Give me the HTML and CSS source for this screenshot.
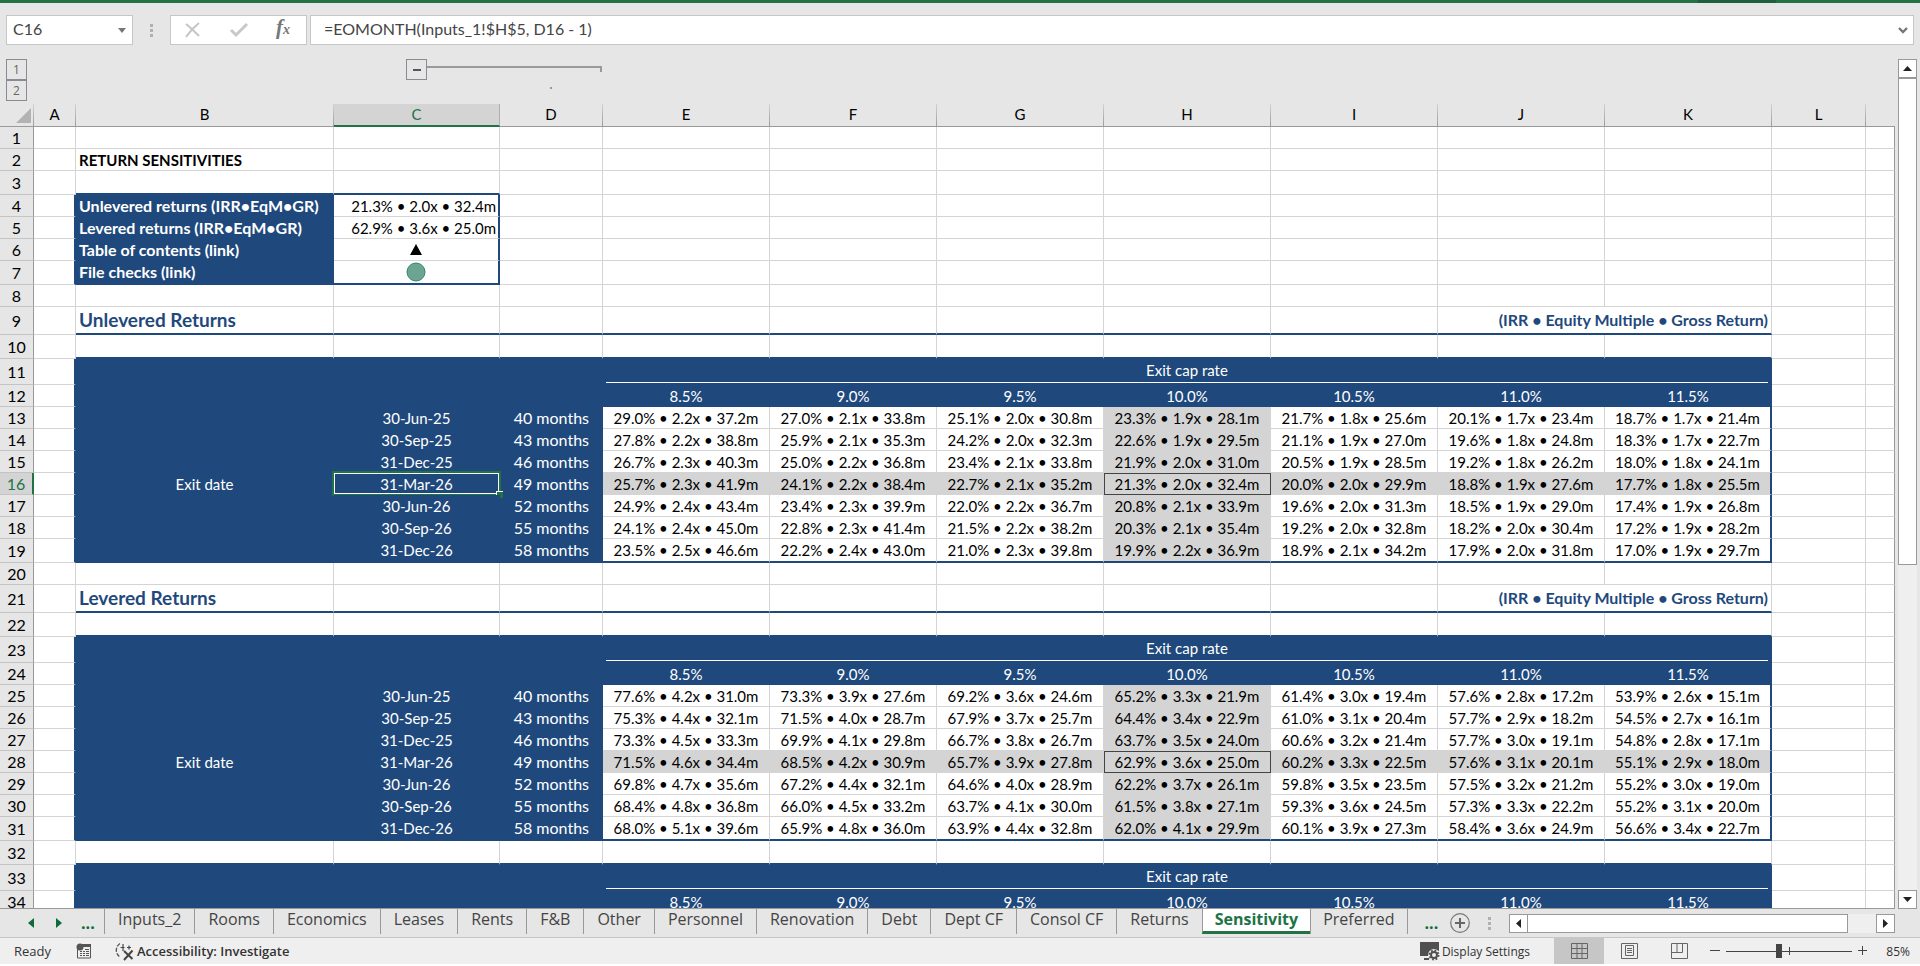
FILE: index.html
```html
<!DOCTYPE html>
<html lang="en">
<head>
<meta charset="utf-8">
<title>Return sensitivities</title>
<link rel="stylesheet" href="styles.css">
</head>
<body>
<div class="app">
  <div class="title-strip"></div>
  <header class="formula-bar">
    <div class="name-box">
      <input class="name-input" type="text" value="C16" aria-label="Name box">
      <button class="bare" type="button" aria-label="Named ranges"><svg width="8" height="5" viewBox="0 0 8 5"><path d="M0 0h8L4 5z" fill="#777"/></svg></button>
    </div>
    <span class="grip"><i></i><i></i><i></i></span>
    <div class="formula-tools">
      <button class="bare" type="button" aria-label="Cancel"><svg width="16" height="16" viewBox="0 0 16 16"><path d="M1 2c5 4 9 8 13 12M14 1C9 5 5 9 1 15" fill="none" stroke="#c4c4c4" stroke-width="2"/></svg></button>
      <button class="bare" type="button" aria-label="Enter"><svg width="18" height="16" viewBox="0 0 18 16"><path d="M1 8l5 5L17 2" fill="none" stroke="#c8c8c8" stroke-width="3"/></svg></button>
      <button class="bare fx" type="button" aria-label="Insert function">f<sub>x</sub></button>
    </div>
    <div class="formula-box">
      <input class="formula-input" type="text" value="=EOMONTH(Inputs_1!$H$5, D16 - 1)" aria-label="Formula">
      <button class="bare" type="button" aria-label="Expand formula bar"><svg width="10" height="7" viewBox="0 0 10 7"><path d="M1 1l4 4 4-4" fill="none" stroke="#777" stroke-width="2.4"/></svg></button>
    </div>
  </header>

  <main class="workspace">
    <div class="sheet-side">
      <div class="outline">
        <div class="levels">
          <button class="outline-btn" type="button">1</button>
          <button class="outline-btn" type="button">2</button>
        </div>
        <div class="group">
          <button class="outline-btn collapse" type="button" aria-label="Collapse group"></button>
          <span class="bracket"></span>
        </div>
      </div>
      <div class="sheet">
        <table class="grid">
          <colgroup>
            <col class="w-head"><col class="w-a"><col class="w-b"><col class="w-c"><col class="w-d">
            <col class="w-val"><col class="w-val"><col class="w-val"><col class="w-val"><col class="w-val"><col class="w-val"><col class="w-val">
            <col class="w-l"><col>
          </colgroup>
          <thead id="columns"></thead>
          <tbody id="rows"></tbody>
        </table>
      </div>
    </div>
    <div class="v-scroll">
      <button class="scroll-btn" type="button" aria-label="Scroll up"><svg width="9" height="5" viewBox="0 0 9 5"><path d="M0 5h9L4.500 0z" fill="#222"/></svg></button>
      <div class="v-track"><div class="v-thumb"></div></div>
      <button class="scroll-btn" type="button" aria-label="Scroll down"><svg width="9" height="5" viewBox="0 0 9 5"><path d="M0 0h9L4.500 5z" fill="#222"/></svg></button>
    </div>
  </main>

  <nav class="tab-bar">
    <div class="tab-nav">
      <button class="bare" type="button" aria-label="Previous sheets"><svg width="6" height="10" viewBox="0 0 6 10"><path d="M6 0v10L0 5z" fill="#0e6b3a"/></svg></button>
      <button class="bare" type="button" aria-label="Next sheets"><svg width="6" height="10" viewBox="0 0 6 10"><path d="M0 0v10l6-5z" fill="#0e6b3a"/></svg></button>
      <button class="bare more" type="button">...</button>
    </div>
    <div class="tabs">
      <button class="tab" type="button">Inputs_2</button><button class="tab" type="button">Rooms</button><button class="tab" type="button">Economics</button><button class="tab" type="button">Leases</button><button class="tab" type="button">Rents</button><button class="tab" type="button">F&amp;B</button><button class="tab" type="button">Other</button><button class="tab" type="button">Personnel</button><button class="tab" type="button">Renovation</button><button class="tab" type="button">Debt</button><button class="tab" type="button">Dept CF</button><button class="tab" type="button">Consol CF</button><button class="tab" type="button">Returns</button><button class="tab active" type="button">Sensitivity</button><button class="tab" type="button">Preferred</button>
    </div>
    <button class="bare more" type="button">...</button>
    <button class="bare add" type="button" aria-label="New sheet"><svg width="20" height="20" viewBox="0 0 20 20"><circle cx="10" cy="10" r="9.300" fill="none" stroke="#777" stroke-width="1.200"/><path d="M10 5v10M5 10h10" stroke="#666" stroke-width="2"/></svg></button>
    <span class="grip small"><i></i><i></i><i></i></span>
    <div class="h-scroll">
      <button class="scroll-btn" type="button" aria-label="Scroll left"><svg width="5" height="9" viewBox="0 0 5 9"><path d="M5 0v9L0 4.500z" fill="#222"/></svg></button>
      <div class="h-track"><div class="h-thumb"></div></div>
      <button class="scroll-btn" type="button" aria-label="Scroll right"><svg width="5" height="9" viewBox="0 0 5 9"><path d="M0 0v9l5-4.500z" fill="#222"/></svg></button>
    </div>
  </nav>

  <footer class="status-bar">
    <span class="ready">Ready</span>
    <button class="bare macro" type="button" aria-label="Record macro"><svg width="16" height="16" viewBox="0 0 16 16"><path d="M1.500 5v10h13V1.500H6" fill="none" stroke="#555"/><path d="M6 1h9v3H6z" fill="#555"/><circle cx="4" cy="4" r="3.500" fill="#555"/><path d="M4 8.500h2M7 8.500h2M10 8.500h3M4 10.500h2M7 10.500h2M10 10.500h3M4 12.500h2M7 12.500h2M10 12.500h3M9 6.500h4" stroke="#555"/></svg></button>
    <button class="bare access" type="button"><svg width="19" height="19" viewBox="0 0 19 19"><path d="M5 1.500A8 8 0 0 0 5 15" fill="none" stroke="#555" stroke-width="1.300" stroke-dasharray="4 1.500"/><path d="M5.500 5.500h4M8 2v7M12 5.500h4M14 3.500v4" stroke="#444" stroke-width="1.200"/><path d="M9 9l8.500 8M17.500 8.500L9 18" stroke="#444" stroke-width="2"/></svg><span>Accessibility: Investigate</span></button>
    <button class="bare display" type="button"><svg width="20" height="19" viewBox="0 0 20 19"><path d="M0 0h19v9H10l-2 5H0z" fill="#505050"/><path d="M4 17h5" stroke="#505050" stroke-width="2"/><circle cx="14" cy="13" r="6" fill="#efefef"/><circle cx="14" cy="13" r="3" fill="none" stroke="#505050" stroke-width="2"/><circle cx="14" cy="13" r="4.600" fill="none" stroke="#505050" stroke-width="1.800" stroke-dasharray="1.800 1.800"/></svg><span>Display Settings</span></button>
    <div class="views">
      <button class="view on" type="button" aria-label="Normal"><svg width="17" height="16" viewBox="0 0 17 16"><path d="M.5.5h16v15H.5zM6 .5v15M11 .5v15M.5 5.500h16M.5 10.500h16" fill="none" stroke="#666"/></svg></button>
      <button class="view" type="button" aria-label="Page layout"><svg width="17" height="16" viewBox="0 0 17 16"><path d="M.5.5h16v15H.5zM4.500 2.500h8v10h-8zM6 5.500h5M6 7.500h5M6 9.500h5" fill="none" stroke="#666"/></svg></button>
      <button class="view" type="button" aria-label="Page break preview"><svg width="17" height="16" viewBox="0 0 17 16"><path d="M.5.5h16v15H.5zM.5 9.500h11v-9M6 .5v9" fill="none" stroke="#666"/></svg></button>
    </div>
    <div class="zoom">
      <button class="bare" type="button" aria-label="Zoom out"><svg width="10" height="10" viewBox="0 0 10 10"><path d="M0 4.500h10" stroke="#444"/></svg></button>
      <input class="zoom-range" type="range" min="0" max="100" value="42" aria-label="Zoom">
      <button class="bare" type="button" aria-label="Zoom in"><svg width="10" height="10" viewBox="0 0 10 10"><path d="M0 4.500h9M4.500 0v9" stroke="#444"/></svg></button>
      <span class="zoom-value">85%</span>
    </div>
  </footer>
</div>
<script src="sheet.js"></script>
</body>
</html>
```

FILE: sheet.js
```js
const letters = ["A", "B", "C", "D", "E", "F", "G", "H", "I", "J", "K", "L", ""];
const caps = ["8.5%", "9.0%", "9.5%", "10.0%", "10.5%", "11.0%", "11.5%"];
const dates = ["30-Jun-25", "30-Sep-25", "31-Dec-25", "31-Mar-26", "30-Jun-26", "30-Sep-26", "31-Dec-26"];
const months = [40, 43, 46, 49, 52, 55, 58];

const unlevered = [
  "29.0 2.2 37.2|27.0 2.1 33.8|25.1 2.0 30.8|23.3 1.9 28.1|21.7 1.8 25.6|20.1 1.7 23.4|18.7 1.7 21.4",
  "27.8 2.2 38.8|25.9 2.1 35.3|24.2 2.0 32.3|22.6 1.9 29.5|21.1 1.9 27.0|19.6 1.8 24.8|18.3 1.7 22.7",
  "26.7 2.3 40.3|25.0 2.2 36.8|23.4 2.1 33.8|21.9 2.0 31.0|20.5 1.9 28.5|19.2 1.8 26.2|18.0 1.8 24.1",
  "25.7 2.3 41.9|24.1 2.2 38.4|22.7 2.1 35.2|21.3 2.0 32.4|20.0 2.0 29.9|18.8 1.9 27.6|17.7 1.8 25.5",
  "24.9 2.4 43.4|23.4 2.3 39.9|22.0 2.2 36.7|20.8 2.1 33.9|19.6 2.0 31.3|18.5 1.9 29.0|17.4 1.9 26.8",
  "24.1 2.4 45.0|22.8 2.3 41.4|21.5 2.2 38.2|20.3 2.1 35.4|19.2 2.0 32.8|18.2 2.0 30.4|17.2 1.9 28.2",
  "23.5 2.5 46.6|22.2 2.4 43.0|21.0 2.3 39.8|19.9 2.2 36.9|18.9 2.1 34.2|17.9 2.0 31.8|17.0 1.9 29.7"
];
const levered = [
  "77.6 4.2 31.0|73.3 3.9 27.6|69.2 3.6 24.6|65.2 3.3 21.9|61.4 3.0 19.4|57.6 2.8 17.2|53.9 2.6 15.1",
  "75.3 4.4 32.1|71.5 4.0 28.7|67.9 3.7 25.7|64.4 3.4 22.9|61.0 3.1 20.4|57.7 2.9 18.2|54.5 2.7 16.1",
  "73.3 4.5 33.3|69.9 4.1 29.8|66.7 3.8 26.7|63.7 3.5 24.0|60.6 3.2 21.4|57.7 3.0 19.1|54.8 2.8 17.1",
  "71.5 4.6 34.4|68.5 4.2 30.9|65.7 3.9 27.8|62.9 3.6 25.0|60.2 3.3 22.5|57.6 3.1 20.1|55.1 2.9 18.0",
  "69.8 4.7 35.6|67.2 4.4 32.1|64.6 4.0 28.9|62.2 3.7 26.1|59.8 3.5 23.5|57.5 3.2 21.2|55.2 3.0 19.0",
  "68.4 4.8 36.8|66.0 4.5 33.2|63.7 4.1 30.0|61.5 3.8 27.1|59.3 3.6 24.5|57.3 3.3 22.2|55.2 3.1 20.0",
  "68.0 5.1 39.6|65.9 4.8 36.0|63.9 4.4 32.8|62.0 4.1 29.9|60.1 3.9 27.3|58.4 3.6 24.9|56.6 3.4 22.7"
];

const cell = (text = "", cls = "", span = 1) =>
  `<td${cls ? ` class="${cls}"` : ""}${span > 1 ? ` colspan="${span}"` : ""}>${text}</td>`;
const blanks = (n, cls = "") => cell("", cls).repeat(n);

let number = 0;
const out = [];
function row(size, cells, cls = "") {
  number += 1;
  const current = number === 16 ? " current" : "";
  out.push(`<tr class="${size} ${cls}"><th scope="row" class="row-head${current}">${number}</th>${cells}</tr>`);
}

function summary(size, label, value, cls, valueCls) {
  row(size, cell("", "edge") + cell(label, "label") + cell(value, "box " + valueCls) + blanks(10), cls);
}

function heading(text) {
  row("tall", cell() + cell(text, "title") + blanks(7, "rule") +
    cell("(IRR • Equity Multiple • Gross Return)", "caption", 2) + blanks(2));
}

function blockHead() {
  row("head", cell("", "edge") + blanks(3, "blue") +
    cell('<div class="cap-title">Exit cap rate</div>', "blue cap", 7) + blanks(2));
  row("std", cell("", "edge") + blanks(3, "blue") + caps.map(c => cell(c, "blue center")).join("") + blanks(2));
}

function blockBody(data) {
  data.forEach((line, r) => {
    const last = r === 6;
    const date = number === 15 ? dates[r] + '<span class="selection"></span>' : dates[r];
    const values = line.split("|").map((v, c) => {
      const [irr, multiple, gross] = v.split(" ");
      let cls = "center value";
      if (r === 3 || c === 3) cls += " shade";
      if (r === 3 && c === 3) cls += " base";
      if (c === 6) cls += " last-col";
      return cell(`${irr}% • ${multiple}x • ${gross}m`, cls);
    }).join("");
    row(last ? "mid" : "std", cell("", "edge") + cell(r === 3 ? "Exit date" : "", "blue center") +
      cell(date, "blue center anchor") + cell(months[r] + " months", "blue months") + values + blanks(2),
      last ? "last-row" : "");
  });
}

document.getElementById("columns").innerHTML =
  '<tr><th class="corner"><svg width="15" height="15" viewBox="0 0 15 15"><path d="M15 0v15H0z" fill="#b3b3b3"/></svg></th>' +
  letters.map(l => `<th scope="col" class="col-head${l === "C" ? " current" : ""}">${l}</th>`).join("") + "</tr>";

row("std", blanks(13));
row("std", cell() + cell("RETURN SENSITIVITIES", "strong") + blanks(11));
row("mid", cell() + blanks(2, "over") + blanks(10));
summary("std", "Unlevered returns (IRR•EqM•GR)", "21.3% • 2.0x • 32.4m", "", "right");
summary("std", "Levered returns (IRR•EqM•GR)", "62.9% • 3.6x • 25.0m", "", "right");
summary("std", "Table of contents (link)", '<svg width="12" height="11" viewBox="0 0 12 11"><path d="M6 0l6 11H0z"/></svg>', "", "center");
summary("mid", "File checks (link)", '<svg width="20" height="20" viewBox="0 0 20 20"><circle cx="10" cy="10" r="9" fill="#6aa592" stroke="#3f7f69"/></svg>', "last-row", "center");
row("std", blanks(13));
heading("Unlevered Returns");
row("mid", cell() + blanks(10, "over") + blanks(2));
blockHead();
blockBody(unlevered);
row("std", blanks(13));
heading("Levered Returns");
row("mid", cell() + blanks(10, "over") + blanks(2));
blockHead();
blockBody(levered);
row("mid", cell() + blanks(10, "over") + blanks(2));
blockHead();
document.getElementById("rows").innerHTML = out.join("");
```

FILE: styles.css
```css
* { box-sizing: border-box; }
body { margin: 0; font-family: "Open Sans", "Noto Sans", sans-serif; color: #444; }
button, input { font: inherit; color: inherit; }
svg { display: block; flex: none; }

.app { display: flex; flex-direction: column; height: 100vh; background: #e6e6e6; border-bottom: 2px solid #fff; overflow: hidden; }
.title-strip { flex: none; height: 3px; background: linear-gradient(#1f5f3c, #1f5f3c) right 144px top / 78px 3px no-repeat #217346; }
.bare { display: flex; align-items: center; justify-content: center; padding: 0; border: 0; background: none; }

/* Formula bar */
.formula-bar { flex: none; display: flex; align-items: stretch; height: 30px; margin: 12px 6px 0; font-family: Lato, sans-serif; font-size: 16px; line-height: 20px; }
.name-box, .formula-tools, .formula-box { display: flex; align-items: center; background: #fff; border: 1px solid #c6c6c6; }
.name-box { width: 127px; padding: 0 6px; }
.name-input, .formula-input { flex: 1; min-width: 0; border: 0; padding: 0 0 2px; background: none; outline: 0; }
.grip { display: flex; flex-direction: column; justify-content: center; align-items: center; gap: 2px; width: 37px; }
.grip i { width: 3px; height: 3px; background: #b0b0b0; }
.formula-tools { width: 137px; justify-content: space-between; padding: 0 16px 0 14px; }
.fx { align-items: baseline; padding-bottom: 3px; font: italic 700 21px/22px "Liberation Serif", serif; color: #777; }
.fx sub { font-size: 14px; vertical-align: baseline; }
.formula-box { flex: 1; margin-left: 3px; padding: 0 5px 0 13px; }

/* Outline strip and grid */
.workspace { flex: 1; min-height: 0; display: flex; padding-top: 14px; }
.sheet-side { flex: 1; min-width: 0; display: flex; flex-direction: column; }
.outline { flex: none; display: flex; height: 45px; padding-left: 6px; }
.levels { width: 400px; }
.outline-btn { display: flex; align-items: center; justify-content: center; width: 21px; height: 21px; padding: 0; border: 1px solid #8a8a94; background: none; font-size: 12px; color: #666; }
.group { display: flex; }
.collapse::before { content: ""; width: 8px; height: 2px; background: #555; }
.bracket { width: 175px; height: 6px; margin-top: 7px; border-top: 2px solid #999; border-right: 2px solid #999; }
.bracket::after { content: ""; display: block; width: 2px; height: 2px; margin: 19px 0 0 123px; background: #999; }

.sheet { flex: 1; min-height: 0; overflow: hidden; border-bottom: 1px solid #999; }
.grid { width: 100%; table-layout: fixed; border-collapse: separate; border-spacing: 0; background: #fff; font-family: Lato, sans-serif; font-size: 15px; color: #000; }
.w-head { width: 34px; }
.w-a { width: 42px; }
.w-b { width: 258px; }
.w-c { width: 166px; }
.w-d { width: 103px; }
.w-val { width: 167px; }
.w-l { width: 94px; }
.grid th, .grid td { padding: 0 3px; line-height: 20px; font-weight: 400; white-space: nowrap; vertical-align: middle; text-align: left; }
.grid td { border-right: 1px solid #d4d4d4; border-bottom: 1px solid #d4d4d4; }
.grid td:last-child { border-right-color: #999; }
.grid .col-head, .grid .corner, .grid .row-head { background: #e6e6e6; text-align: center; }
.grid .row-head { font-size: 16px; }
.grid .col-head, .grid .corner { height: 23px; padding-bottom: 2px; border-bottom: 1px solid #999; border-right: 1px solid; border-image: linear-gradient(#d4d4d4, #999) 1; }
.grid .col-head:last-child { border-right: 0; }
.grid .corner svg { margin: 2px 0 0 13px; }
.grid .row-head { border-right: 1px solid #999; border-bottom: 1px solid #c4c4c4; padding: 0; }
.grid .current { background: #d4d4d4; color: #217346; }
.grid .col-head.current { padding-bottom: 1px; border-image: none; border-right-color: #b0b0b0; border-bottom: 2px solid #217346; }
.grid .row-head.current { border-right: 2px solid #217346; }
.grid .col-head, .grid .corner, .grid .tall td { line-height: 18px; }
.std { height: 22px; }
.mid { height: 24px; }
.head { height: 26px; }
.tall { height: 28px; }

.grid .edge { border-right: 2px solid #1f497d; }
.grid .over { border-bottom: 2px solid #1f497d; }
.grid .strong { font-weight: 700; }
.grid .label { background: #1f497d; border-color: #1f497d; color: #fff; font-size: 16px; font-weight: 700; }
.grid .box { border-right: 2px solid #1f497d; }
.grid .last-row .label, .grid .last-row .box, .grid .last-row .blue, .grid .last-row .value { border-bottom: 2px solid #1f497d; }
.grid .right { text-align: right; padding-right: 2px; }
.grid .center { text-align: center; }
.grid .center svg { margin: 0 auto; }
.grid .title, .grid .caption, .grid .rule { border-bottom: 2px solid #1f497d; color: #1f497d; font-size: 16px; font-weight: 700; }
.grid .title { font-size: 19px; }
.grid .caption { text-align: right; }
.grid .blue { background: #1f497d; border-color: #1f497d; color: #fff; }
.grid .months { text-align: right; padding-right: 13px; font-size: 16px; }
.grid .cap { vertical-align: top; }
.cap-title { height: 24px; line-height: 23px; text-align: center; border-bottom: 1px solid #fff; }
.grid .shade { background: #d4d4d4; }
.grid .base { box-shadow: inset 1px 0 #444, inset 0 1px #444; border-color: #444; }
.grid .last-col { border-right: 2px solid #1f497d; }
.grid .anchor { position: relative; }
.selection { position: absolute; inset: -2px; border: 2px solid #217346; outline: 1px solid #fff; outline-offset: -3px; }
.selection::after { content: ""; position: absolute; right: -4px; bottom: -4px; width: 6px; height: 6px; background: #217346; border-top: 1px solid #fff; border-left: 1px solid #fff; }

/* Scroll bars */
.scroll-btn { display: flex; align-items: center; justify-content: center; flex: none; width: 19px; height: 19px; padding: 0; border: 1px solid #999; background: #fff; }
.v-scroll { display: flex; flex-direction: column; width: 25px; padding: 0 3px; }
.v-track { flex: 1; min-height: 0; background: #efefef; }
.v-thumb { height: 60%; border: 1px solid #999; background: #fff; }
.h-scroll { display: flex; width: 386px; height: 19px; }
.h-track { flex: 1; background: #efefef; }
.h-thumb { width: 92%; height: 19px; border: 1px solid #999; border-left: 0; background: #fff; }

/* Sheet tabs */
.tab-bar { flex: none; display: flex; align-items: center; height: 29px; padding-right: 25px; border-bottom: 1px solid #c6c6c6; }
.tab-nav { display: flex; align-items: center; gap: 22px; width: 104px; padding-left: 28px; flex: none; }
.more { font-weight: 700; font-size: 16px; line-height: 20px; color: #0e6b3a; }
.tab-nav .more { margin-left: -3px; }
.tabs { display: flex; align-items: flex-start; height: 28px; }
.tab { display: flex; align-items: flex-start; height: 25px; margin: 0; padding: 0 13px; border: 0; border-left: 1px solid #999; background: none; font-size: 16px; line-height: 20px; white-space: nowrap; }
.tab.active { background: #fff; color: #217346; font-weight: 700; border-bottom: 3px solid #217346; }
.tab.active, .tab.active + .tab { padding: 0 12px; }
.tab:last-child { border-right: 1px solid #999; }
.tab-bar > .more { margin-left: 17px; }
.add { margin-left: 12px; }
.small { flex: 1; }

/* Status bar */
.status-bar { flex: none; display: flex; align-items: center; height: 26px; background: #efefef; font-size: 13px; color: #333; }
.ready { width: 76px; padding-left: 14px; }
.access { gap: 3px; margin-left: 23px; font-weight: 600; }
.display { gap: 2px; margin-left: auto; font-size: 12px; }
.views { display: flex; align-self: stretch; margin-left: 24px; }
.view { display: flex; align-items: center; justify-content: center; width: 50px; padding: 0; border: 0; background: none; }
.view.on { background: #c6c6c6; }
.zoom { display: flex; align-items: center; gap: 6px; margin-left: 6px; padding-right: 10px; }
.zoom-range { appearance: none; width: 126px; height: 20px; margin: 0; background: linear-gradient(#444, #444) center / 100% 1px no-repeat, linear-gradient(#444, #444) center / 1px 8px no-repeat; }
.zoom-range::-webkit-slider-thumb { appearance: none; width: 6px; height: 14px; background: #444; }
.zoom-value { width: 36px; text-align: right; font-size: 12px; }
```
